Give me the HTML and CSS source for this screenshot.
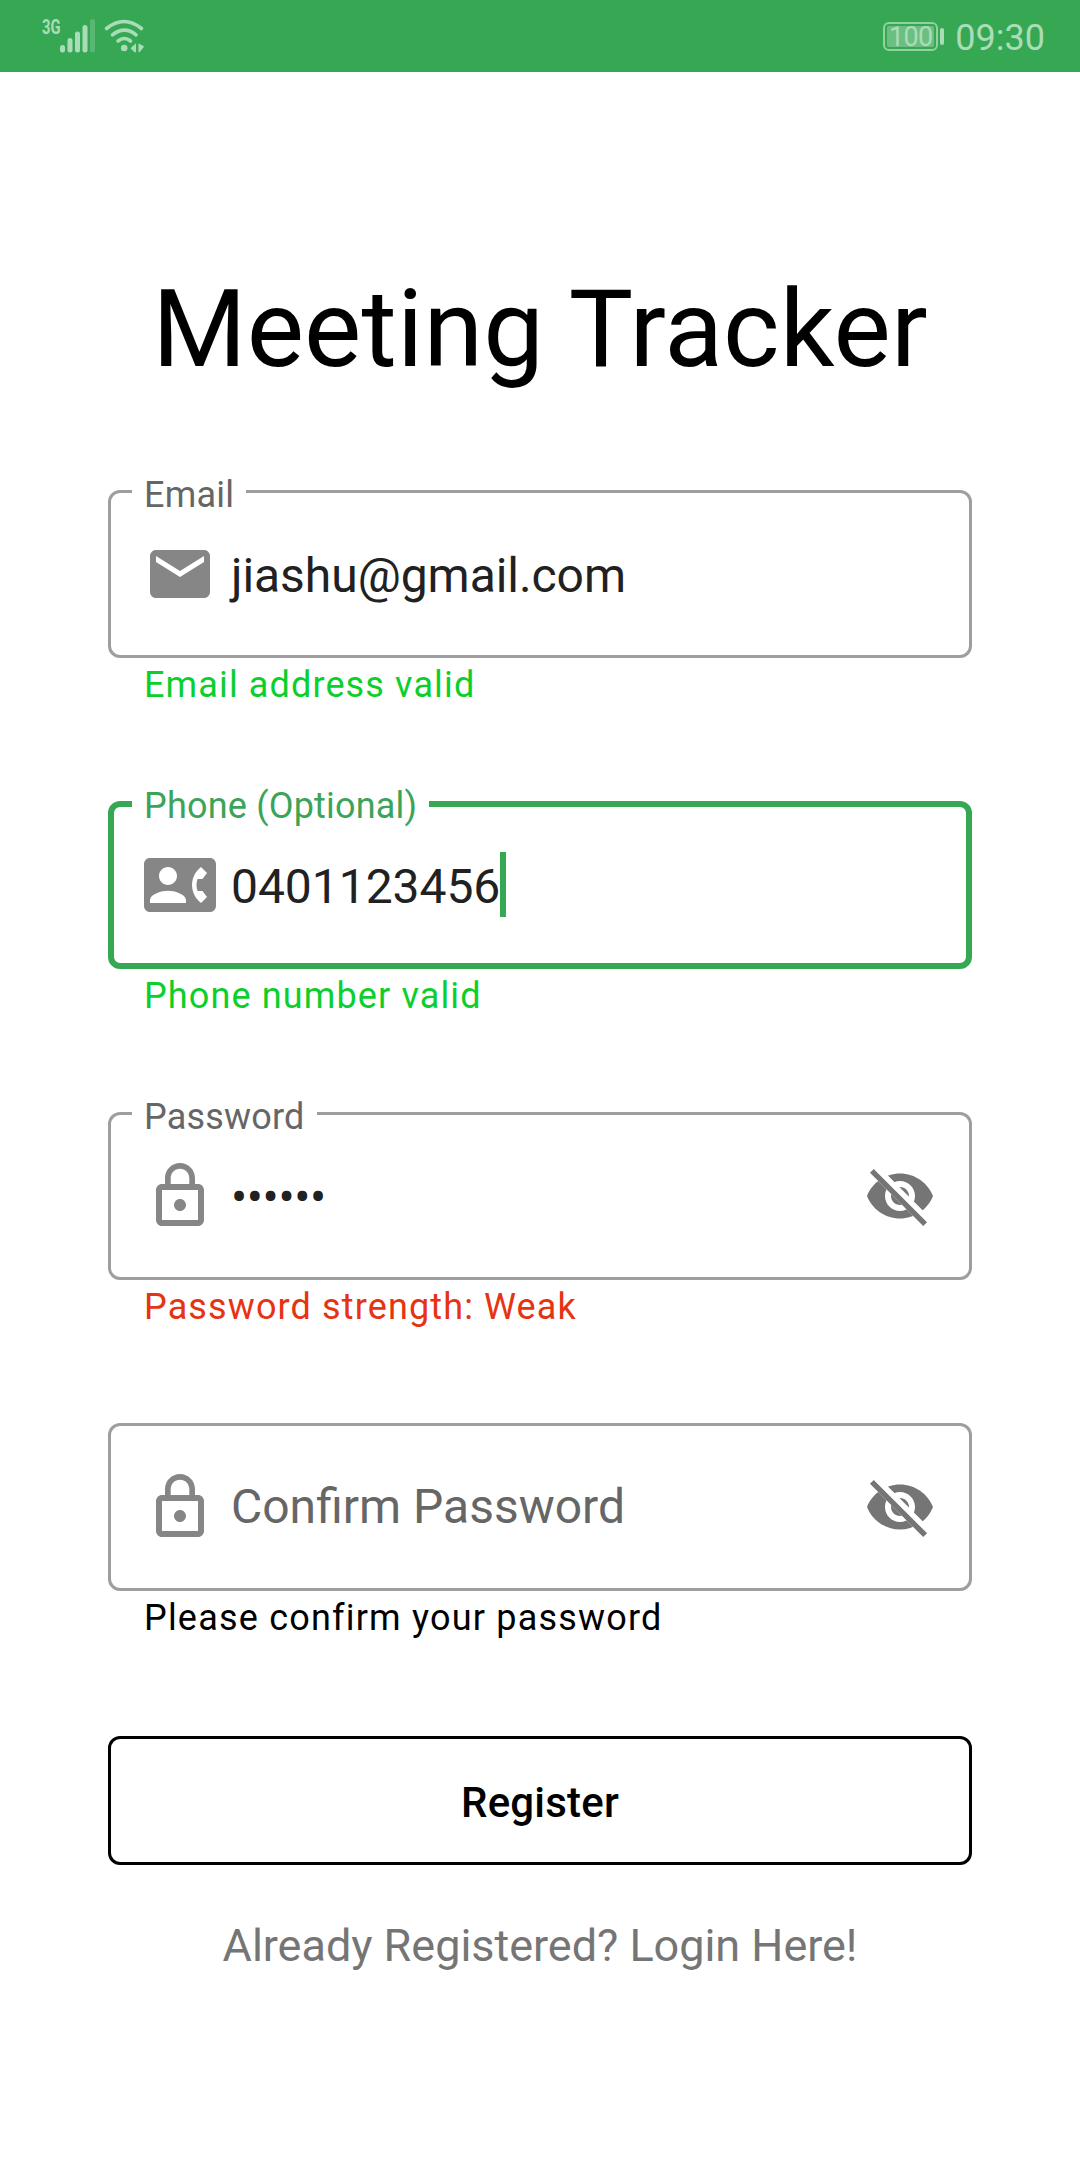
FILE: index.html
```html
<!DOCTYPE html>
<html lang="en">
<head>
<meta charset="utf-8">
<title>Meeting Tracker</title>
<link rel="stylesheet" href="styles.css">
</head>
<body>
<svg class="defs" width="0" height="0" aria-hidden="true">
  <symbol id="lock" viewBox="0 0 24 24"><path d="M12 17c1.1 0 2-.9 2-2s-.9-2-2-2-2 .9-2 2 .9 2 2 2zm6-9h-1V6c0-2.76-2.24-5-5-5S7 3.24 7 6v2H6c-1.1 0-2 .9-2 2v10c0 1.100.9 2 2 2h12c1.100 0 2-.9 2-2V10c0-1.100-.9-2-2-2zM8.900 6c0-1.710 1.390-3.100 3.100-3.100s3.100 1.390 3.100 3.100v2H8.900V6zM18 20H6V10h12v10z"/></symbol>
  <symbol id="eye-off" viewBox="0 0 24 24">
    <clipPath id="eye-cut"><path d="M2 4.27L19.73 22l2.540-2.540L4.540 1.730V1H23v22H1V4.270z"/></clipPath>
    <path clip-path="url(#eye-cut)" d="M12 4.500C7 4.500 2.730 7.610 1 12c1.730 4.390 6 7.500 11 7.500s9.270-3.110 11-7.500c-1.730-4.390-6-7.500-11-7.500zM12 17c-2.760 0-5-2.240-5-5s2.240-5 5-5 5 2.240 5 5-2.240 5-5 5zM12 9c-1.660 0-3 1.340-3 3s1.340 3 3 3 3-1.340 3-3-1.340-3-3-3z"/>
    <path d="M3.270 4.270L19.740 20.740" fill="none" stroke="currentColor" stroke-width="1.8" stroke-linecap="square"/>
  </symbol>
</svg>

<header class="status-bar">
  <svg class="status-signal" viewBox="0 0 160 72">
    <text class="network" x="42" y="34" textLength="18.500" lengthAdjust="spacingAndGlyphs">3G</text>
    <rect x="60" y="45" width="5" height="7.500" rx="2.500"/>
    <rect x="67.500" y="38" width="5" height="14.500" rx="2.500"/>
    <rect x="75" y="31.500" width="5" height="21" rx="2.500"/>
    <rect x="82.500" y="25" width="5" height="27.500" rx="2.500"/>
    <rect class="faint" x="90" y="19" width="5" height="33.500" rx="2.500"/>
    <g class="wave">
      <path d="M106.500 28.500Q124 14.500 141.500 28.500"/>
      <path d="M112.500 34.800Q124.500 25.500 136 34.800"/>
      <path d="M118 41Q124.500 36 130.500 41"/>
    </g>
    <circle cx="124.200" cy="48" r="3.300"/>
    <path d="M130.500 48.200L136 43.300V52.200H134.500zM138.500 43.300L144.200 46.500 139.500 52.200H138.500z"/>
  </svg>
  <div class="status-right">
    <div class="battery"><span class="charge">100</span></div>
    <span class="nub"></span>
    <time class="clock">09:30</time>
  </div>
</header>

<main class="page">
  <h1 class="title">Meeting Tracker</h1>

  <section class="field">
    <div class="box">
      <span class="label">Email</span>
      <svg class="icon" viewBox="0 0 24 24"><path d="M20 4H4c-1.100 0-1.990.9-1.990 2L2 18c0 1.100.9 2 2 2h16c1.100 0 2-.9 2-2V6c0-1.100-.9-2-2-2zm0 4l-8 5-8-5V6l8 5 8-5v2z"/></svg>
      <span class="value">jiashu@gmail.com</span>
    </div>
    <p class="helper valid">Email address valid</p>
  </section>

  <section class="field">
    <div class="box focused">
      <span class="label">Phone (Optional)</span>
      <svg class="icon" viewBox="0 0 24 24"><path d="M22 3H2C.9 3 0 3.900 0 5v14c0 1.100.9 2 2 2h20c1.100 0 1.990-.9 1.990-2L24 5c0-1.100-.9-2-2-2zM8 6c1.660 0 3 1.340 3 3s-1.340 3-3 3-3-1.340-3-3 1.340-3 3-3zm6 12H2v-1c0-2 4-3.100 6-3.100s6 1.100 6 3.100v1zm3.850-4h1.640L21 16l-1.990 1.990c-1.310-.98-2.280-2.380-2.730-3.990-.18-.64-.28-1.310-.28-2s.1-1.360.28-2c.45-1.620 1.420-3.010 2.730-3.990L21 8l-1.510 2h-1.640c-.22.63-.35 1.300-.35 2s.13 1.370.35 2z"/></svg>
      <span class="value">0401123456</span><span class="caret"></span>
    </div>
    <p class="helper valid">Phone number valid</p>
  </section>

  <section class="field">
    <div class="box">
      <span class="label">Password</span>
      <svg class="icon"><use href="#lock"/></svg>
      <span class="value dots">••••••</span>
      <svg class="icon toggle"><use href="#eye-off"/></svg>
    </div>
    <p class="helper weak">Password strength: Weak</p>
  </section>

  <section class="field">
    <div class="box">
      <svg class="icon"><use href="#lock"/></svg>
      <span class="value hint">Confirm Password</span>
      <svg class="icon toggle"><use href="#eye-off"/></svg>
    </div>
    <p class="helper confirm">Please confirm your password</p>
  </section>

  <button class="register" type="button">Register</button>
  <a class="login">Already Registered? Login Here!</a>
</main>
</body>
</html>
```

FILE: styles.css
```css
* {
  box-sizing: border-box;
}

body {
  margin: 0;
  min-height: 2160px;
  background: #fff;
  color: #000;
  font-family: Roboto, "Noto Sans", sans-serif;
}

.defs {
  display: block;
}

/* Status bar */
.status-bar {
  display: flex;
  justify-content: space-between;
  height: 72px;
  padding-right: 35px;
  background: #36a854;
  color: #abdcb8;
}

.status-signal {
  width: 160px;
  height: 72px;
  fill: currentColor;
}

.network {
  font-size: 21px;
  font-weight: 700;
}

.faint {
  opacity: .3;
}

.wave {
  fill: none;
  stroke: currentColor;
  stroke-width: 3.6;
  stroke-linecap: round;
}

.status-right {
  display: flex;
  align-items: center;
}

.battery {
  display: flex;
  width: 55px;
  height: 29px;
  margin-top: 1px;
  padding: 2px;
  border: 2px solid #93d1a3;
  border-radius: 6px;
}

.charge {
  flex: 1;
  background: #6bbf80;
  border-radius: 2px;
  font-size: 27px;
  line-height: 22px;
  text-align: center;
  letter-spacing: -0.6px;
}

.nub {
  width: 4px;
  height: 17px;
  margin: 1px 11px 0 2px;
  border-radius: 2px;
  background: currentColor;
}

.clock {
  font-size: 36px;
  line-height: 42px;
  padding-top: 4px;
}

/* Registration form */
.page {
  display: flex;
  flex-direction: column;
  padding: 194px 108px 0;
}

.title {
  margin: 0 0 97px;
  font-size: 108px;
  font-weight: 400;
  line-height: 127px;
  letter-spacing: .15px;
  text-align: center;
  white-space: nowrap;
}

.field {
  height: 311px;
}

.box {
  position: relative;
  display: flex;
  align-items: center;
  height: 168px;
  padding: 0 33px;
  border: 3px solid #9e9e9e;
  border-radius: 12px;
}

.box.focused {
  padding: 0 30px;
  border: 6px solid #36a854;
}

.label {
  position: absolute;
  top: -19px;
  left: 21px;
  padding: 0 12px;
  background: #fff;
  color: #666;
  font-size: 36px;
  line-height: 42px;
  letter-spacing: .2px;
  white-space: nowrap;
}

.focused .label {
  top: -22px;
  left: 18px;
  color: #3ba459;
}

.icon {
  flex: none;
  width: 72px;
  height: 72px;
  color: #868686;
  fill: currentColor;
}

.toggle {
  margin-left: auto;
  color: #757575;
}

.value {
  padding-top: 4px;
  margin-left: 15px;
  color: #212121;
  font-size: 48px;
  line-height: 56px;
  letter-spacing: -.05px;
}

.dots {
  letter-spacing: -.4px;
}

.hint {
  padding: 0;
  color: #666;
  letter-spacing: normal;
}

.caret {
  width: 6px;
  height: 65px;
  margin-top: -1px;
  background: #36a854;
}

.helper {
  margin: 6px 36px 0;
  font-size: 36px;
  line-height: 42px;
  letter-spacing: 1.13px;
}

.confirm {
  letter-spacing: 1.2px;
}

.valid {
  color: #0bcf2b;
}

.weak {
  color: #e63312;
}

.register {
  height: 129px;
  margin-top: 2px;
  padding: 5px 0 0;
  border: 3px solid #000;
  border-radius: 12px;
  background: #fff;
  color: #000;
  font: 500 42px/50px Roboto, "Noto Sans", sans-serif;
  letter-spacing: .2px;
}

.login {
  margin-top: 54px;
  color: #757575;
  font-size: 45px;
  line-height: 53px;
  letter-spacing: -.03px;
  text-align: center;
}
```
